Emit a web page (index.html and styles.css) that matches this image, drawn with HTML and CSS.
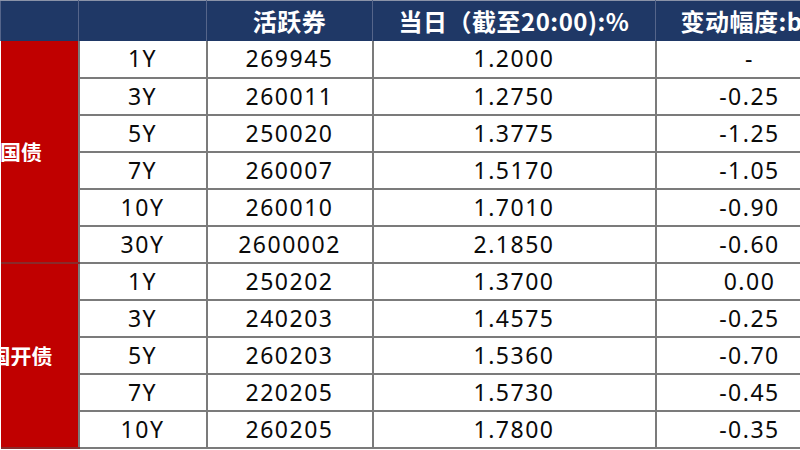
FILE: index.html
```html
<!DOCTYPE html>
<html lang="zh-CN">
<head>
<meta charset="utf-8">
<title>活跃券</title>
<link rel="stylesheet" href="styles.css">
</head>
<body>
<table class="yt">
  <colgroup>
    <col class="c1"><col class="c2"><col class="c3"><col class="c4"><col class="c5">
  </colgroup>
  <thead>
    <tr>
      <th></th><th></th><th>活跃券</th><th>当日（截至20:00):%</th><th>变动幅度:bp</th>
    </tr>
  </thead>
  <tbody>
    <tr><td class="grp" rowspan="6"><div class="gin"><span>国债</span></div></td><td>1Y</td><td>269945</td><td>1.2000</td><td>-</td></tr>
    <tr><td>3Y</td><td>260011</td><td>1.2750</td><td>-0.25</td></tr>
    <tr><td>5Y</td><td>250020</td><td>1.3775</td><td>-1.25</td></tr>
    <tr><td>7Y</td><td>260007</td><td>1.5170</td><td>-1.05</td></tr>
    <tr><td>10Y</td><td>260010</td><td>1.7010</td><td>-0.90</td></tr>
    <tr><td>30Y</td><td>2600002</td><td>2.1850</td><td>-0.60</td></tr>
    <tr><td class="grp" rowspan="5"><div class="gin"><span>国开债</span></div></td><td>1Y</td><td>250202</td><td>1.3700</td><td>0.00</td></tr>
    <tr><td>3Y</td><td>240203</td><td>1.4575</td><td>-0.25</td></tr>
    <tr><td>5Y</td><td>260203</td><td>1.5360</td><td>-0.70</td></tr>
    <tr><td>7Y</td><td>220205</td><td>1.5730</td><td>-0.45</td></tr>
    <tr><td>10Y</td><td>260205</td><td>1.7800</td><td>-0.35</td></tr>
  </tbody>
</table>
</body>
</html>
```

FILE: styles.css
```css
html, body {
  margin: 0;
  padding: 0;
  background: #ffffff;
  overflow: hidden;
  width: 800px;
  height: 450px;
}

.yt {
  border-collapse: collapse;
  table-layout: fixed;
  width: 843px;
  font-family: "Noto Sans", "Noto Sans CJK SC", sans-serif;
  color: #0a0a0a;
}

.c1 { width: 78px; }
.c2 { width: 128px; }
.c3 { width: 166px; }
.c4 { width: 283px; }
.c5 { width: 188px; }

.yt th {
  height: 40px;
  padding: 0;
  background: #1f3866;
  color: #ffffff;
  font-family: "Noto Sans CJK SC", sans-serif;
  font-weight: 700;
  font-size: 24px;
  letter-spacing: 0.5px;
  white-space: nowrap;
  border-left: 1px solid #55658a;
  border-right: 1px solid #55658a;
  border-top: 1px solid #8a93a8;
  border-bottom: none;
  box-sizing: border-box;
}

.yt td {
  height: 37px;
  padding: 0;
  text-align: center;
  font-size: 23px;
  letter-spacing: 1.5px;
  border: 2px solid #7b7b7b;
  box-sizing: border-box;
  line-height: 1;
}

.yt tbody tr:first-child td {
  border-top: none;
}

.yt td.grp {
  background: #c00000;
  color: #ffffff;
  border-left: none;
  border-top: 2px solid #8a2a2a;
  border-bottom: 2px solid #8a2a2a;
  overflow: hidden;
  padding: 0;
}

.gin {
  display: flex;
  justify-content: center;
  padding-right: 36px;
  overflow: hidden;
}

.gin span {
  flex: none;
  font-family: "Noto Sans CJK SC", sans-serif;
  font-weight: 700;
  font-size: 21px;
  letter-spacing: 0;
}
```
